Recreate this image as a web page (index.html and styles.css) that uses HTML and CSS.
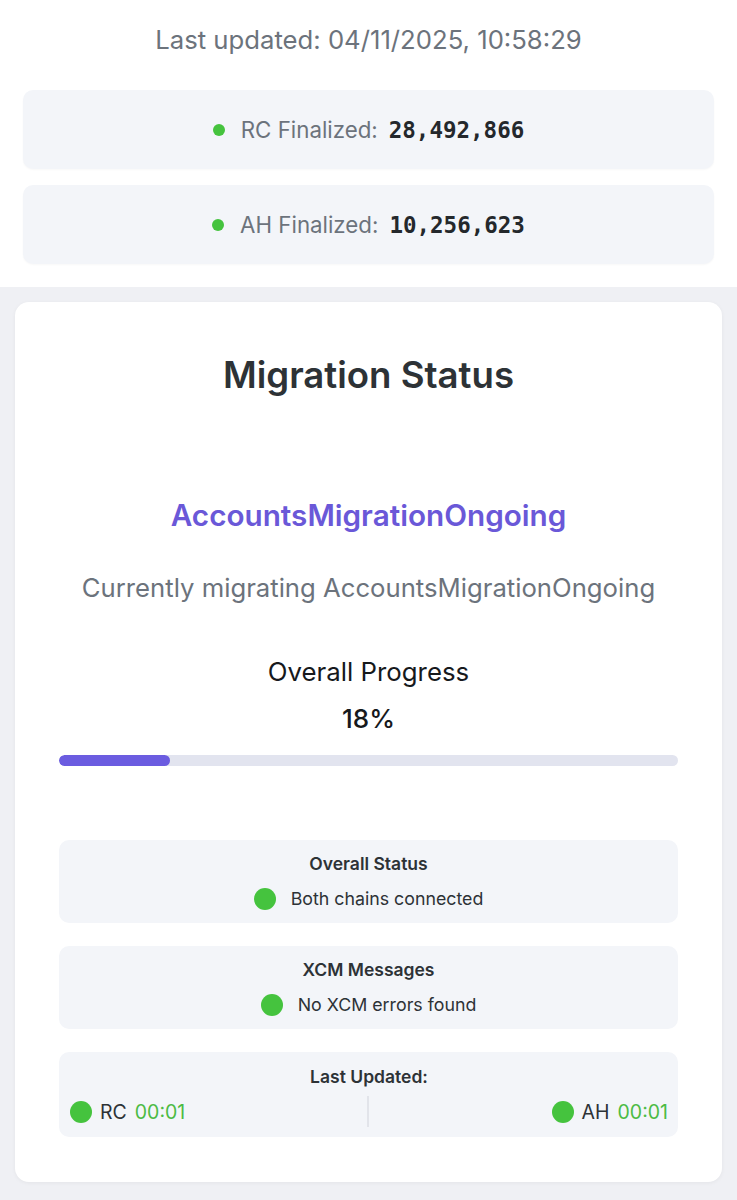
FILE: index.html
```html
<!DOCTYPE html>
<html>
<head>
<meta charset="utf-8">
<link rel="stylesheet" href="styles.css">
</head>
<body>
<header class="top">
  <p class="updated">Last updated: 04/11/2025, 10:58:29</p>
  <div class="chain-box"><span class="dot"></span><span class="chain-label">RC Finalized:</span><span class="chain-value">28,492,866</span></div>
  <div class="chain-box"><span class="dot"></span><span class="chain-label">AH Finalized:</span><span class="chain-value">10,256,623</span></div>
</header>
<main class="main">
  <section class="card">
    <h1 class="title">Migration Status</h1>
    <h2 class="stage">AccountsMigrationOngoing</h2>
    <p class="desc">Currently migrating AccountsMigrationOngoing</p>
    <p class="progress-label">Overall Progress</p>
    <p class="progress-value">18%</p>
    <div class="bar"><div class="bar-fill" style="width:18%"></div></div>
    <div class="status-list">
      <div class="status-box">
        <div class="status-head">Overall Status</div>
        <div class="status-row"><span class="big-dot"></span><span>Both chains connected</span></div>
      </div>
      <div class="status-box">
        <div class="status-head">XCM Messages</div>
        <div class="status-row"><span class="big-dot"></span><span>No XCM errors found</span></div>
      </div>
      <div class="status-box status-box-last">
        <div class="status-head">Last Updated:</div>
        <div class="split-row">
          <div class="split-item"><span class="big-dot"></span><span>RC</span><span class="time">00:01</span></div>
          <div class="divider"></div>
          <div class="split-item"><span class="big-dot"></span><span>AH</span><span class="time">00:01</span></div>
        </div>
      </div>
    </div>
  </section>
</main>
</body>
</html>
```
FILE: styles.css
```css
* { box-sizing: border-box; }
html, body { margin: 0; padding: 0; }
body {
  font-family: Inter, "Noto Sans", sans-serif;
  background: #eff0f4;
  color: #2d3236;
}
.top {
  background: #ffffff;
  padding: 24px 23px 23px;
  display: flex;
  flex-direction: column;
  gap: 16px;
}
.updated {
  margin: 0 0 18px;
  text-align: center;
  font-size: 25.7px;
  line-height: 32px;
  color: #6c737c;
}
.chain-box {
  height: 79px;
  background: #f3f5f9;
  border-radius: 10px;
  display: flex;
  align-items: center;
  justify-content: center;
  box-shadow: 0 1px 2px rgba(0,0,0,0.03);
}
.dot {
  width: 12px;
  height: 12px;
  border-radius: 50%;
  background: #45c33e;
  margin-right: 16px;
}
.chain-label {
  font-size: 22.3px;
  color: #6c737c;
  margin-right: 11px;
}
.chain-value {
  font-family: "DejaVu Sans Mono", "Liberation Mono", monospace;
  font-weight: bold;
  font-size: 22.5px;
  color: #24282c;
}
.main {
  padding: 15px 15px 18px;
}
.card {
  background: #ffffff;
  border-radius: 14px;
  padding: 51px 44px 45px;
  box-shadow: 0 1px 4px rgba(0,0,0,0.05);
  text-align: center;
}
.title {
  margin: 0;
  font-size: 36.6px;
  line-height: 44px;
  font-weight: 600;
  color: #2d3236;
}
.stage {
  margin: 100px 0 0;
  font-size: 29.7px;
  line-height: 36px;
  font-weight: 600;
  color: #6a58d8;
}
.desc {
  margin: 39px 0 0;
  font-size: 25.7px;
  line-height: 32px;
  color: #6c737c;
}
.progress-label {
  margin: 52px 0 0;
  font-size: 25.8px;
  line-height: 32px;
  color: #16191c;
}
.progress-value {
  margin: 15px 0 0;
  font-size: 26px;
  line-height: 32px;
  font-weight: 500;
  color: #16191c;
}
.bar {
  margin-top: 20px;
  height: 11px;
  border-radius: 6px;
  background: #e2e4ef;
  overflow: hidden;
}
.bar-fill {
  height: 100%;
  border-radius: 6px;
  background: #6b5ce0;
}
.status-list {
  margin-top: 74px;
  display: flex;
  flex-direction: column;
  gap: 23px;
}
.status-box {
  background: #f3f5f9;
  border-radius: 10px;
  padding: 13px 11px 12px 11px;
  display: flex;
  flex-direction: column;
  align-items: center;
  gap: 12px;
}
.status-box-last {
  padding: 14px 10px 13px 11px;
}
.status-head {
  font-size: 17.5px;
  line-height: 22px;
  font-weight: 600;
  color: #2d3236;
}
.status-row {
  display: flex;
  align-items: center;
  gap: 15px;
  font-size: 17.8px;
  line-height: 24px;
  color: #2d3236;
}
.big-dot {
  width: 22px;
  height: 22px;
  border-radius: 50%;
  background: #45c33e;
  flex: none;
}
.split-row {
  align-self: stretch;
  display: flex;
  align-items: center;
  justify-content: space-between;
}
.split-item {
  display: flex;
  align-items: center;
  gap: 8px;
  font-size: 19.5px;
  line-height: 24px;
  color: #2d3236;
}
.time {
  color: #4cbb44;
}
.divider {
  width: 2px;
  height: 31px;
  margin: -4px 0 -3px;
  background: #e2e4ea;
}
```
